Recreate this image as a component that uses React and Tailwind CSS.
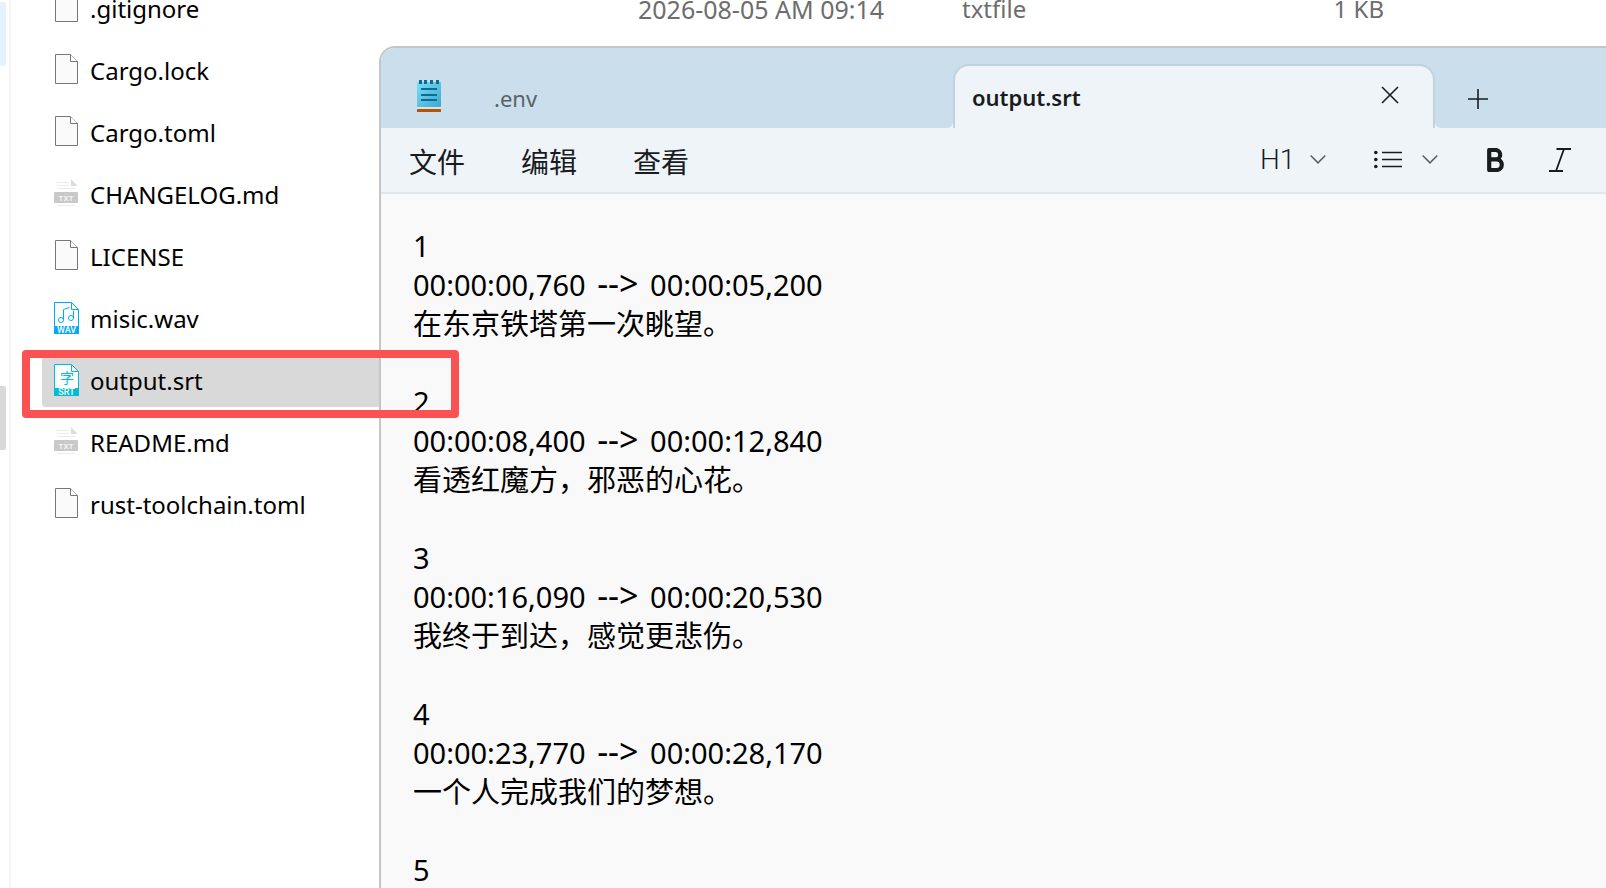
import React from "react";

const files = [
  { name: ".gitignore", kind: "blank", date: "2026-08-05 AM 09:14", type: "txtfile", size: "1 KB" },
  { name: "Cargo.lock", kind: "blank" },
  { name: "Cargo.toml", kind: "blank" },
  { name: "CHANGELOG.md", kind: "txt" },
  { name: "LICENSE", kind: "blank" },
  { name: "misic.wav", kind: "wav" },
  { name: "output.srt", kind: "srt", selected: true },
  { name: "README.md", kind: "txt" },
  { name: "rust-toolchain.toml", kind: "blank" },
];

const cues = [
  { id: 1, from: "00:00:00,760", to: "00:00:05,200", text: "在东京铁塔第一次眺望。" },
  { id: 2, from: "00:00:08,400", to: "00:00:12,840", text: "看透红魔方，邪恶的心花。" },
  { id: 3, from: "00:00:16,090", to: "00:00:20,530", text: "我终于到达，感觉更悲伤。" },
  { id: 4, from: "00:00:23,770", to: "00:00:28,170", text: "一个人完成我们的梦想。" },
  { id: 5 },
];

function BlankIcon() {
  return (
    <svg className="h-8 w-[25px] shrink-0" viewBox="0 0 25 32" fill="none" aria-hidden="true">
      <path d="M1.500 .5H16.500L23.500 7.500V29.500H1.500Z" fill="#fafafa" stroke="#777" />
      <path d="M16.500 .5V7.500H23.500" fill="#fff" stroke="#777" />
    </svg>
  );
}

function TxtIcon() {
  return (
    <svg className="h-8 w-[25px] shrink-0" viewBox="0 0 25 32" fill="none" aria-hidden="true">
      <path d="M3 4.500H15M3 7.500H15M3 10.500H22" stroke="#ececec" />
      <path d="M17 1L23.500 8H17Z" fill="#dcdcdc" />
      <rect y="14" width="24" height="11" rx="1" fill="#c9c9c9" />
      <path d="M3 27.500H21" stroke="#ececec" />
      <text x="12" y="22.500" textAnchor="middle" fontSize="8" fontWeight="600" fill="#f4f4f4" fontFamily="Roboto, sans-serif">TXT</text>
    </svg>
  );
}

function WavIcon() {
  return (
    <svg className="h-8 w-[25px] shrink-0" viewBox="0 0 25 32" fill="none" aria-hidden="true">
      <g transform="translate(0 -1)">
        <path d="M.5 1.500H17.500L24.500 8.500V31.500H.5Z" fill="#fff" stroke="#03a9f4" />
        <path d="M17.500 1.500V8.500H24.500" stroke="#03a9f4" />
        <path d="M9.500 18.500V8.500L15.500 6.500M19.500 17V9.500" stroke="#03a9f4" />
        <circle cx="7" cy="19" r="2.500" stroke="#03a9f4" />
        <circle cx="17" cy="17" r="2.500" stroke="#03a9f4" />
        <rect y="25" width="25" height="8" fill="#03a9f4" />
        <text x="12.500" y="32" textAnchor="middle" fontSize="9" fontWeight="500" fill="#fff" fontFamily="Roboto, sans-serif">WAV</text>
      </g>
    </svg>
  );
}

function SrtIcon() {
  return (
    <svg className="h-8 w-[25px] shrink-0" viewBox="0 0 25 32" fill="none" aria-hidden="true">
      <path d="M.5 .5H17.500L24.500 7.500V31.500H.5Z" fill="#fff" stroke="#00bcd4" />
      <path d="M17.500 .5V7.500H24.500" stroke="#00bcd4" />
      <text x="13" y="18.500" textAnchor="middle" fontSize="14" fill="#00bcd4" fontFamily="'Noto Sans CJK SC', sans-serif">字</text>
      <rect y="24" width="25" height="8" fill="#00bcd4" />
      <text x="12.500" y="31" textAnchor="middle" fontSize="9" fontWeight="500" fill="#fff" fontFamily="Roboto, sans-serif">SRT</text>
    </svg>
  );
}

const icons = { blank: BlankIcon, txt: TxtIcon, wav: WavIcon, srt: SrtIcon };

function FileTable() {
  return (
    <table className="-mt-[22px] w-full min-w-[1340px] table-fixed border-collapse text-left text-[24px] leading-8">
      <colgroup>
        <col className="w-[596px]" />
        <col className="w-[324px]" />
        <col className="w-[240px]" />
        <col className="w-[182px]" />
        <col />
      </colgroup>
      <tbody>
        {files.map((file) => {
          const Icon = icons[file.kind];
          return (
            <tr key={file.name} className="h-[62px]" aria-selected={!!file.selected}>
              <td className="p-0">
                <div className={`flex h-[52px] items-center gap-[11px] rounded-sm pl-3 text-black ${file.selected ? "bg-[#d9d9d9]" : ""}`}>
                  <span className="-mt-0.5">
                    <Icon />
                  </span>
                  <span>{file.name}</span>
                </div>
              </td>
              <td className="p-0 text-[25px] text-[#6d6d6d]">{file.date}</td>
              <td className="p-0 text-[#6d6d6d]">{file.type}</td>
              <td className="p-0 text-right text-[#6d6d6d]">{file.size}</td>
              <td className="p-0" />
            </tr>
          );
        })}
      </tbody>
    </table>
  );
}

function NotepadIcon() {
  return (
    <svg className="h-8 w-6 shrink-0" viewBox="0 0 24 32" fill="none" aria-hidden="true">
      <defs>
        <linearGradient id="page" x1="0" y1="0" x2="1" y2="1">
          <stop offset="0" stopColor="#7bdcf5" />
          <stop offset="1" stopColor="#3ea9cf" />
        </linearGradient>
      </defs>
      <rect y="29" width="24" height="3" rx=".5" fill="#b4530c" />
      <rect y="27" width="24" height="2" fill="#d9e3e8" />
      <rect y="2" width="24" height="25" rx="1" fill="url(#page)" />
      <path d="M3.500 0V4M8.500 0V4M14.500 0V4M20.500 0V4" stroke="#0a6d96" strokeWidth="3" />
      <path d="M4 9H20M4 15H20M4 20H20" stroke="#0a6d96" strokeWidth="2" />
    </svg>
  );
}

function Chevron() {
  return (
    <svg className="h-4 w-4" viewBox="0 0 16 16" fill="none" aria-hidden="true">
      <path d="M.7 3.500L8 10.800L15.300 3.500" stroke="#5c6063" strokeWidth="1.600" />
    </svg>
  );
}

function TabBar() {
  return (
    <header className="flex h-20 items-end bg-[#cbdeeb]">
      <div className="flex h-16 w-[93px] shrink-0 items-center pl-9">
        <NotepadIcon />
      </div>
      <div className="flex h-16 w-[479px] min-w-0 items-center pt-1 pl-5">
        <button type="button" className="text-[22px] leading-8 text-[#5b6368]">.env</button>
      </div>
      <div className="relative flex h-16 w-[482px] min-w-0 items-center justify-between rounded-t-2xl border-2 border-b-0 border-[#bed2e0] bg-[#eff4f9] pr-[34px] pl-[17px]">
        <span className="absolute -left-2 bottom-0 size-1.5 bg-[#eff4f9]">
          <span className="block size-full rounded-br-md bg-[#cbdeeb]" />
        </span>
        <button type="button" className="text-[22px] leading-8 font-semibold text-[#191c1e]">output.srt</button>
        <button type="button" aria-label="Close tab" className="pb-1">
          <svg className="h-[18px] w-[18px]" viewBox="0 0 18 18" fill="none" aria-hidden="true">
            <path d="M1 1L17 17M17 1L1 17" stroke="#191c1e" strokeWidth="1.600" />
          </svg>
        </button>
        <span className="absolute -right-2 bottom-0 size-1.5 bg-[#eff4f9]">
          <span className="block size-full rounded-bl-md bg-[#cbdeeb]" />
        </span>
      </div>
      <button type="button" aria-label="New tab" className="flex h-16 items-center pt-1.5 pl-[33px]">
        <svg className="h-5 w-5" viewBox="0 0 20 20" fill="none" aria-hidden="true">
          <path d="M10 0V20M0 10H20" stroke="#191c1e" strokeWidth="1.600" />
        </svg>
      </button>
    </header>
  );
}

function Toolbar() {
  return (
    <div className="flex h-[66px] items-center justify-between border-b-2 border-[#e3e8ec] bg-[#eff4f9] pr-[34px] pl-7 text-[#191c1e]">
      <nav className="flex gap-14 pt-1 text-[28px] leading-10">
        <button type="button">文件</button>
        <button type="button">编辑</button>
        <button type="button">查看</button>
      </nav>
      <div className="flex items-center gap-12">
        <button type="button" className="flex w-16 items-center justify-between" aria-label="H1">
          <span className="-ml-0.5 font-[Roboto,sans-serif] text-[28px] leading-8 font-light">H1</span>
          <Chevron />
        </button>
        <button type="button" className="flex w-16 items-center justify-between" aria-label="List">
          <svg className="h-5 w-7" viewBox="0 0 28 20" fill="none" aria-hidden="true">
            <path d="M8 2.500H28M8 9.500H28M8 16.500H28" stroke="#191c1e" strokeWidth="1.600" />
            <circle cx="1.800" cy="2.500" r="1.800" fill="#191c1e" />
            <circle cx="1.800" cy="9.500" r="1.800" fill="#191c1e" />
            <circle cx="1.800" cy="16.500" r="1.800" fill="#191c1e" />
          </svg>
          <Chevron />
        </button>
        <div className="-ml-0.5 flex items-center gap-10">
          <button type="button" aria-label="Bold">
            <svg className="size-6" viewBox="0 0 24 24" fill="none" aria-hidden="true">
              <path d="M5.200 2H11.500A4.600 4.600 0 0 1 11.500 11.400H5.200ZM5.200 11.400H12.500A5.200 5.200 0 0 1 12.500 22H5.200Z" stroke="#191c1e" strokeWidth="4.200" strokeLinejoin="round" />
            </svg>
          </button>
          <button type="button" aria-label="Italic">
            <svg className="size-6" viewBox="0 0 24 24" fill="none" aria-hidden="true">
              <path d="M8.500 1H23M1 23H15M16 1L8 23" stroke="#191c1e" strokeWidth="1.800" />
            </svg>
          </button>
        </div>
      </div>
    </div>
  );
}

function Editor() {
  return (
    <div
      role="textbox"
      aria-multiline="true"
      aria-label="output.srt"
      contentEditable
      suppressContentEditableWarning
      spellCheck={false}
      className="min-h-0 flex-1 overflow-hidden bg-[#f9f9f9] pt-8 pl-8 text-[29px] leading-[39px] text-black outline-none"
    >
      {cues.map((cue) => (
        <div key={cue.id} className="pb-[39px]">
          <p>{cue.id}</p>
          {cue.text && (
            <>
              <p>
                {cue.from} <span className="px-1 text-[34px] leading-none">--&gt;</span> {cue.to}
              </p>
              <p>{cue.text}</p>
            </>
          )}
        </div>
      ))}
    </div>
  );
}

export default function App() {
  return (
    <div className="relative flex h-screen overflow-hidden bg-white font-['Noto_Sans','Noto_Sans_CJK_SC',sans-serif]">
      <aside className="flex w-[11px] shrink-0 flex-col border-r-2 border-[#f5f5f5] pt-0.5">
        <div className="h-16 w-1.5 rounded-r-xs bg-[#e5f3ff]" />
        <div className="mt-80 h-16 w-1.5 rounded-r-xs bg-[#d9d9d9]" />
      </aside>
      <main className="min-w-0 flex-1 overflow-hidden pl-[31px]">
        <FileTable />
      </main>
      <section className="absolute top-[46px] right-0 bottom-0 left-[379px] flex flex-col overflow-hidden rounded-tl-2xl border-t-2 border-l-2 border-[#c5c5c5]">
        <TabBar />
        <Toolbar />
        <Editor />
      </section>
      <div className="pointer-events-none absolute top-[350px] left-[22px] h-[68px] w-[437px] rounded-sm border-8 border-[#fa5252]" />
    </div>
  );
}
